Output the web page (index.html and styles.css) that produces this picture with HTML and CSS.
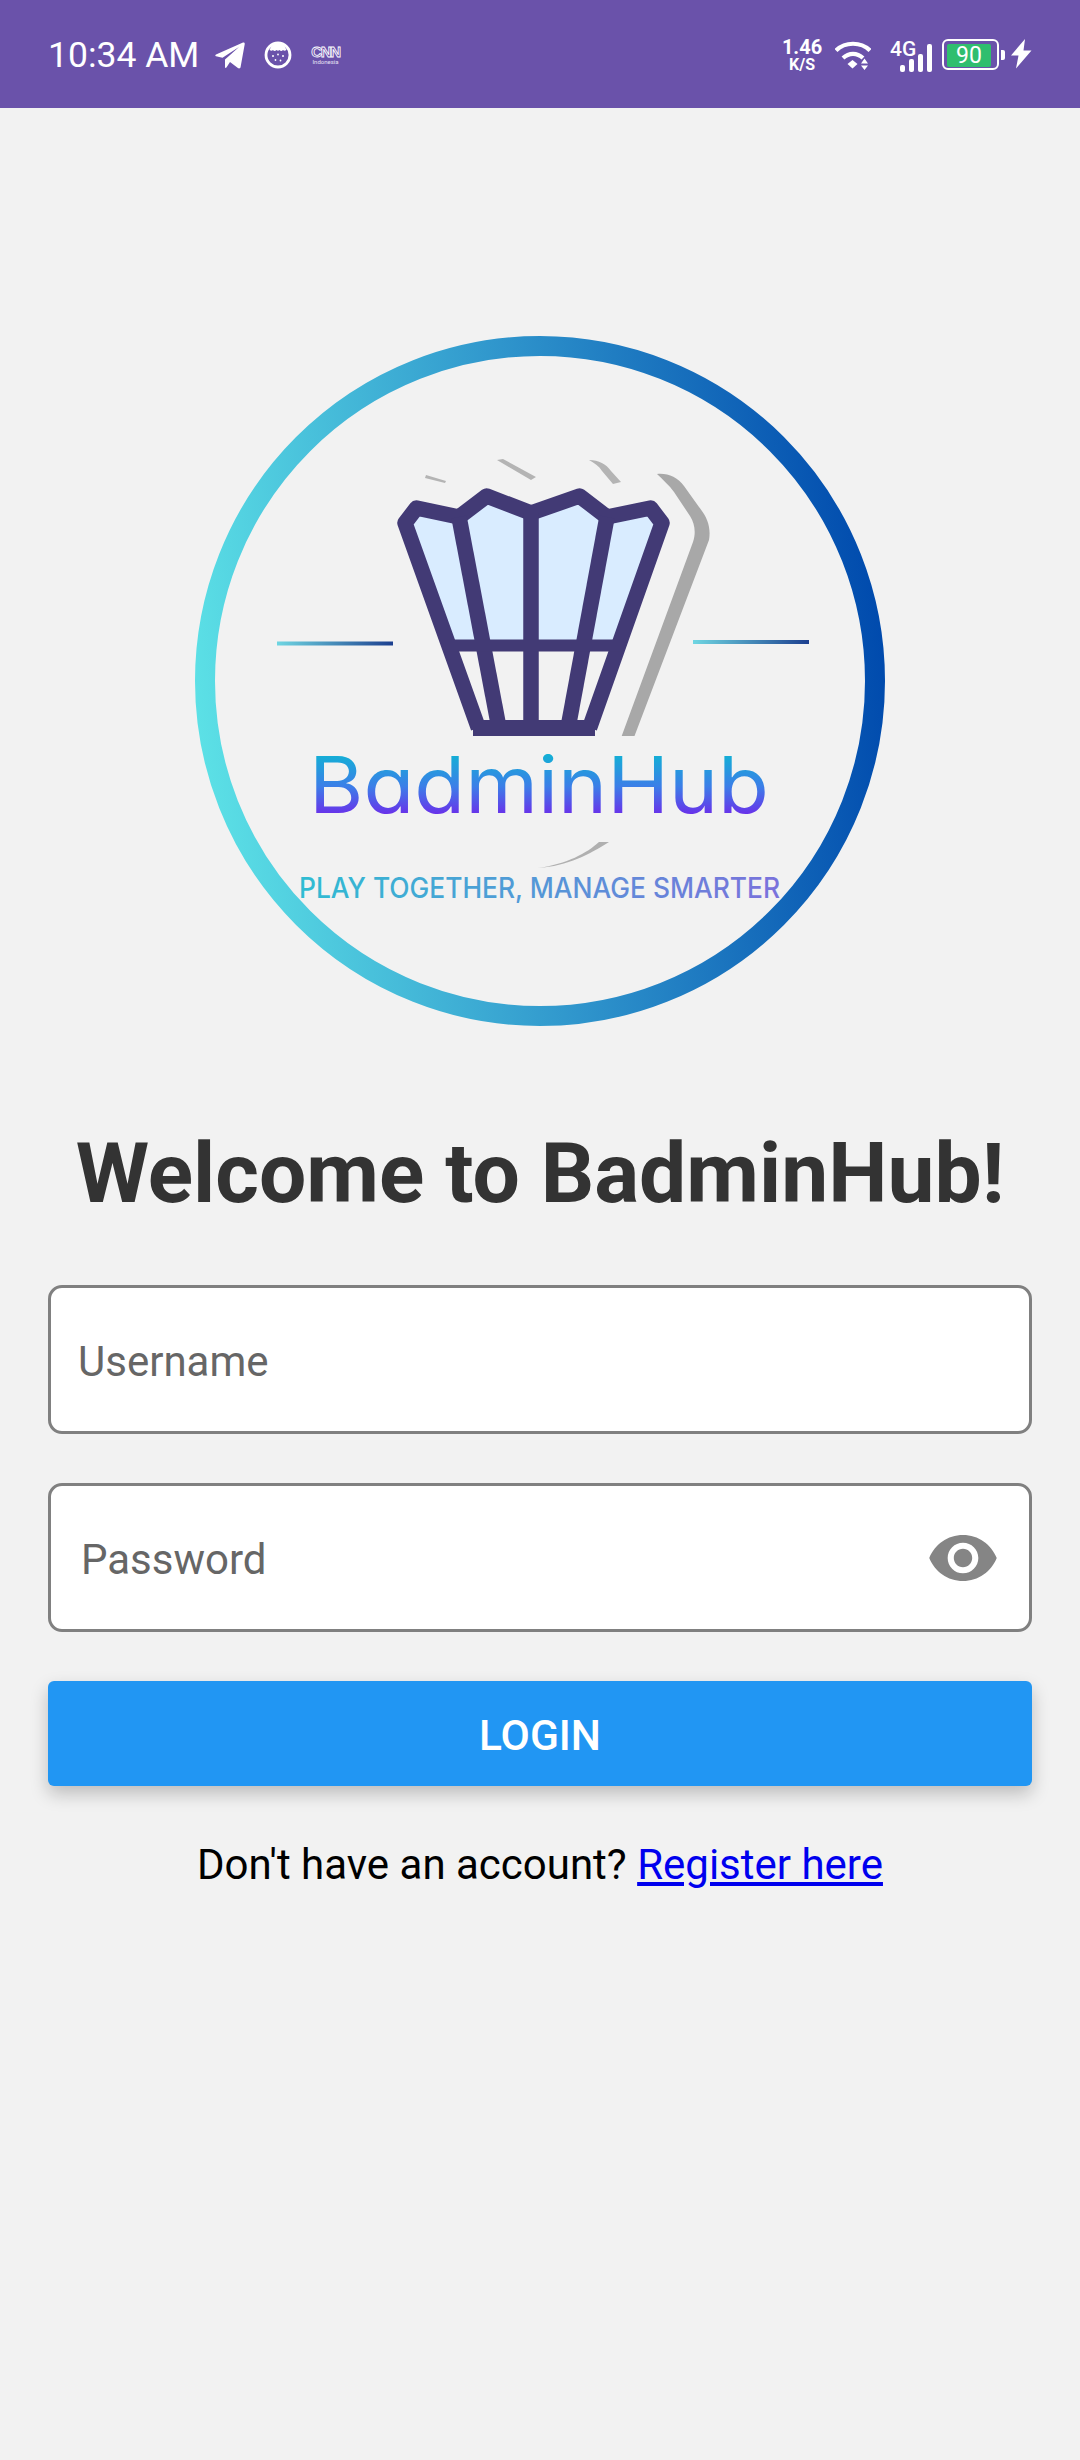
FILE: index.html
```html
<!DOCTYPE html>
<html lang="en">
<head>
<meta charset="utf-8">
<title>BadminHub Login</title>
<link rel="stylesheet" href="styles.css">
</head>
<body>
<header class="status">
  <div class="status-left">
    <span class="time">10:34 AM</span>
    <svg class="ic-telegram" viewBox="0 0 30 27"><path d="M1 12.400 28 .6c1-.4 2 .3 1.700 1.600L25.600 25c-.3 1.500-1.600 1.800-2.700 1L15 20l-3.600 5.600c-.5.7-1.400.4-1.400-.4V17.400L24 5 7.500 15.800 1 14.300c-.9-.3-.9-1.500 0-1.900z" fill="#fff"/></svg>
    <svg class="ic-face" viewBox="0 0 28 28"><circle cx="14" cy="14" r="12" fill="none" stroke="#fff" stroke-width="2.800"/><path d="M7 5.500c2-2 4-3 7-3s5 1 7 3c.5 1.500 1 2.500 1.500 3-1 1.500-2.500 1.500-3.500.5-1.500 1.500-2.500 1-3.500 0-1 1-2 1-3 0-1 1-2.500 1.500-3.500 0-1 1-2.500 1-3.500-.5.500-.5 1-1.500 1.500-3z" fill="#fff"/><g fill="#fff"><circle cx="9" cy="15" r="1"/><circle cx="14" cy="13.500" r=".9"/><circle cx="19" cy="15" r="1"/><circle cx="11.500" cy="19" r=".9"/><circle cx="16.500" cy="19.500" r=".9"/></g></svg>
    <span class="cnn"><span class="cnn-mark">CNN</span><span class="cnn-sub">Indonesia</span></span>
  </div>
  <div class="status-right">
    <span class="speed"><span class="speed-num">1.46</span><span class="speed-unit">K/S</span></span>
    <svg class="ic-wifi" viewBox="0 0 36 30"><path d="M1 9.500C10 .5 26 .5 35 9.500" fill="none" stroke="#fff" stroke-width="4.200"/><path d="M8 17c6-5.500 14-5.500 20 0" fill="none" stroke="#fff" stroke-width="4.200"/><path d="M12.500 23l5-4 5 4-5 4.500z" fill="#fff"/><path d="M26 22.500l3.500-5 3.500 5zM26 24.500h7L29.500 29z" fill="#fff"/></svg>
    <span class="signal">
      <span class="net">4G</span>
      <span class="bars"><i class="bar b1"></i><i class="bar b2"></i><i class="bar b3"></i><i class="bar b4"></i></span>
    </span>
    <span class="battery"><span class="battery-fill">90</span></span>
    <i class="battery-tip"></i>
    <svg class="ic-bolt" viewBox="0 0 22 30"><path d="M15 0 1 16.500h7.500L6 29.500 21.500 11.500h-8z" fill="#fff"/></svg>
  </div>
</header>
<main class="page">
  <svg class="logo" viewBox="195 336 690 690" role="img" aria-label="BadminHub logo">
    <defs>
      <linearGradient id="ring" gradientUnits="userSpaceOnUse" x1="195" y1="720" x2="885" y2="640">
        <stop offset="0" stop-color="#5ce1e6"/><stop offset=".5" stop-color="#2f95cc"/><stop offset="1" stop-color="#004aad"/>
      </linearGradient>
      <linearGradient id="dashL" x1="0" x2="1" y1="0" y2="0"><stop offset="0" stop-color="#6fd6e2"/><stop offset="1" stop-color="#1c3f8f"/></linearGradient>
      <linearGradient id="word" gradientUnits="userSpaceOnUse" x1="0" x2="0" y1="752" y2="815"><stop offset="0" stop-color="#10b4d4"/><stop offset=".55" stop-color="#3c7ee8"/><stop offset="1" stop-color="#6a2fea"/></linearGradient>
      <linearGradient id="tag" gradientUnits="userSpaceOnUse" x1="300" x2="780" y1="0" y2="0"><stop offset="0" stop-color="#2fbcd2"/><stop offset="1" stop-color="#7a72dc"/></linearGradient>
    </defs>
    <circle cx="540" cy="681" r="335" fill="#f2f2f2" stroke="url(#ring)" stroke-width="20"/>
    <rect x="277" y="641.500" width="116" height="4" fill="url(#dashL)"/>
    <rect x="693" y="640" width="116" height="4" fill="url(#dashL)"/>
    <path d="M657 474c11-1 20 3 27 12l15 21c9 11 12 21 10 33L634.500 736h-12.800L693 542c3-9 2-18-3-26l-16-24c-5-7-11-12-17-18z" fill="#a8a8a8"/>
    <path d="M426 475l20 6-1 2-20-5zM497 460l6-1 33 18-5 3zM589 460c10 0 17 4 22 11l10 11-8 2-11-13c-3-5-8-8-13-11z" fill="#b4b4b4"/>
    <path d="M538 868c30-2 52-14 71-26h-10c-12 11-32 22-61 26z" fill="#b0b0b0"/>
    <path d="M405 523l11.500-15L459 517l27.700-21L531 513l48.500-17 27.500 21 43.600-9 11.400 15-40 122.500H446z" fill="#d9ecff"/>
    <g fill="none" stroke="#423a75" stroke-width="15.500" stroke-linejoin="round">
      <path d="M478.400 728 405 523l11.500-15L459 517l27.700-21L531 513l48.500-17 27.500 21 43.600-9 11.400 15-72.500 205"/>
      <path d="M459 517 499 728"/>
      <path d="M607 517 568 728"/>
      <path d="M531 513V728"/>
    </g>
    <rect x="447" y="639.500" width="176" height="12" fill="#423a75"/>
    <rect x="473" y="720" width="122" height="16" fill="#423a75"/>
    <text class="logo-word" x="309" y="813" textLength="460" lengthAdjust="spacingAndGlyphs" fill="url(#word)">BadminHub</text>
    <text class="logo-tag" x="299" y="898" textLength="481" lengthAdjust="spacingAndGlyphs" fill="url(#tag)">PLAY TOGETHER, MANAGE SMARTER</text>
  </svg>
  <h1 class="title">Welcome to BadminHub!</h1>
  <form class="form">
    <div class="field"><input class="input" type="text" placeholder="Username"></div>
    <div class="field field-pass">
      <input class="input" type="password" placeholder="Password">
      <svg class="ic-eye" viewBox="1 4.500 22 15"><path d="M12 4.500C7 4.500 2.730 7.610 1 12c1.730 4.390 6 7.500 11 7.500s9.270-3.110 11-7.500c-1.730-4.390-6-7.500-11-7.500zM12 17c-2.760 0-5-2.240-5-5s2.240-5 5-5 5 2.240 5 5-2.240 5-5 5zm0-8c-1.660 0-3 1.340-3 3s1.340 3 3 3 3-1.340 3-3-1.340-3-3-3z" fill="#858585"/></svg>
    </div>
    <button class="login" type="button">LOGIN</button>
  </form>
  <p class="register">Don't have an account? <a href="#">Register here</a></p>
</main>
</body>
</html>
```

FILE: styles.css
```css
* { box-sizing: border-box; }
html, body { margin: 0; padding: 0; }
body {
  width: 1080px;
  height: 2460px;
  background: #f2f2f2;
  font-family: Roboto, "Liberation Sans", sans-serif;
  overflow: hidden;
}

/* status bar */
.status {
  height: 108px;
  background: #6a52aa;
  color: #fff;
  display: flex;
  justify-content: space-between;
  align-items: center;
  padding: 0 48px;
}
.status-left, .status-right { display: flex; align-items: center; }
.time { font-size: 35.5px; line-height: 42px; width: 167px; margin-top: 1px; }
.ic-telegram { width: 30px; height: 27px; margin-top: 2px; }
.ic-face { width: 28px; height: 28px; margin-left: 19px; margin-top: 2px; }
.cnn { display: flex; flex-direction: column; align-items: center; width: 27px; margin-left: 20px; margin-top: 2px; }
.cnn-mark { font: 700 15px/13px "Liberation Sans", sans-serif; letter-spacing: -1.400px; color: transparent; -webkit-text-stroke: .8px #fff; }
.cnn-sub { font-size: 6px; line-height: 7px; color: #e6e0f4; }
.speed { display: flex; flex-direction: column; align-items: center; width: 38px; font-weight: 700; margin-right: 13px; margin-top: 1px; }
.speed-num { font-size: 20px; line-height: 20px; }
.speed-unit { font-size: 16px; line-height: 16px; }
.ic-wifi { width: 36px; height: 30px; margin-top: 3px; margin-left: 1px; }
.signal { position: relative; display: block; width: 42px; height: 31px; margin-left: 19px; margin-top: 4px; }
.net { position: absolute; left: 0; top: -2px; font-size: 21px; line-height: 21px; font-weight: 500; }
.bars { position: absolute; left: 10px; bottom: 0; display: flex; align-items: flex-end; gap: 4px; }
.bar { display: block; width: 5px; background: #fff; border-radius: 2px; }
.b1 { height: 7px; }
.b2 { height: 13px; }
.b3 { height: 18px; }
.b4 { height: 28px; }
.battery { display: flex; width: 57px; height: 31px; margin-left: 10px; padding: 2px; border: 2px solid #fff; border-radius: 6px; margin-top: 1px; }
.battery-fill {
  display: flex; align-items: center; justify-content: center;
  width: 44px; height: 23px; margin: 1px 0 0 1px;
  background: #2fbe6e; border-radius: 2px;
  font-size: 23px; line-height: 23px;
}
.battery-tip { display: block; width: 4px; height: 10px; margin-left: 2px; background: #fff; border-radius: 0 2px 2px 0; margin-top: 2px; }
.ic-bolt { width: 22px; height: 30px; margin-left: 5px; }

/* page */
.page { display: flex; flex-direction: column; align-items: center; padding: 228px 48px 0; }
.logo { display: block; width: 690px; height: 690px; }
.logo-word { font-family: Inter, sans-serif; font-size: 78px; font-weight: 400; font-feature-settings: "cv11"; }
.logo-tag { font-family: Inter, sans-serif; font-size: 28px; font-weight: 500; }
.title { margin: 97px 0 0; font-size: 83.900px; line-height: 100px; font-weight: 700; color: #333; white-space: nowrap; }
.form { width: 984px; margin-top: 62px; display: flex; flex-direction: column; gap: 49px; }
.field {
  display: flex; align-items: center;
  height: 149px;
  background: #fff;
  border: 3px solid #808080;
  border-radius: 14px;
  padding: 0 24px 0 27px;
}
.field-pass { padding-left: 30px; padding-right: 32px; }
.input {
  flex: 1; min-width: 0; height: 100%;
  border: 0; outline: 0; padding: 4px 0 0; background: transparent;
  font: 400 42px Roboto, sans-serif; color: #333;
}
.input::placeholder { color: #666; opacity: 1; }
.ic-eye { width: 68px; height: 46px; flex: none; }
.login {
  height: 105px;
  border: 0; border-radius: 6px;
  padding: 3px 0 0;
  background: #2196f3; color: #fff;
  font: 500 42.500px Roboto, sans-serif;
  box-shadow: 0 8px 18px rgba(0, 0, 0, .22);
}
.register { margin: 54px 0 0; font-size: 42px; line-height: 50px; color: #000; text-align: center; }
.register a { color: #0000ee; text-decoration: underline; }
```
